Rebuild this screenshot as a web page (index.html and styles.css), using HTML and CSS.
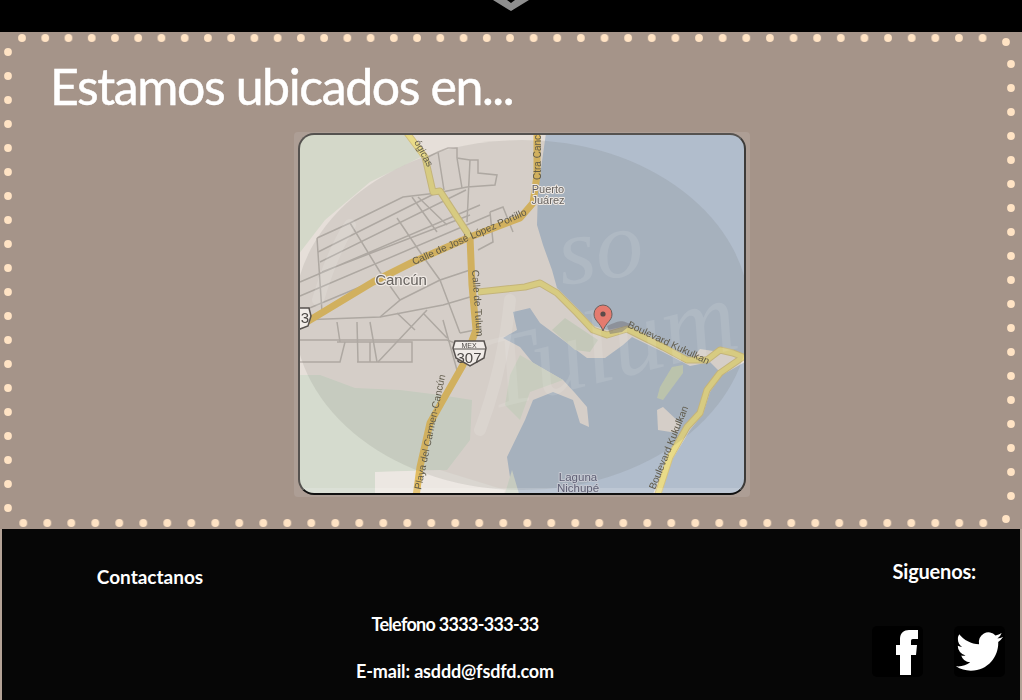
FILE: index.html
```html
<!DOCTYPE html>
<html>
<head>
    <title>Estamos ubicados</title>
    <meta charset="utf-8">
    <link rel="stylesheet" href="styles.css">
</head>
<body>
    <div class="top-bar">
        <svg class="chevron" width="36" height="12" viewBox="0 0 36 12">
            <path d="M0 0H14L18 3L22 0H36L18 11Z" fill="#8e8e8e"/>
        </svg>
    </div>

    <section class="location">
        <!-- dotted frame -->
        <svg class="dots" viewBox="0 32 1022 497">
            <defs>
                <pattern id="dotsTopA" patternUnits="userSpaceOnUse" x="10.38" y="32" width="23.24" height="12"><circle cx="11.62" cy="6" r="3.9" fill="#ffe3c4"/></pattern>
                <pattern id="dotsTopB" patternUnits="userSpaceOnUse" x="521.8" y="32" width="23.63" height="12"><circle cx="11.81" cy="6" r="3.9" fill="#ffe3c4"/></pattern>
                <pattern id="dotsBottom" patternUnits="userSpaceOnUse" x="11.3" y="517" width="24" height="12"><circle cx="12" cy="6" r="3.9" fill="#ffe3c4"/></pattern>
                <pattern id="dotsLeft" patternUnits="userSpaceOnUse" x="2" y="40" width="12" height="24"><circle cx="6" cy="12" r="3.9" fill="#ffe3c4"/></pattern>
                <pattern id="dotsRight" patternUnits="userSpaceOnUse" x="1005" y="52" width="12" height="24"><circle cx="6" cy="12" r="3.9" fill="#ffe3c4"/></pattern>
            </defs>
            <rect x="10.38" y="32" width="511.3" height="12" fill="url(#dotsTopA)"/>
            <rect x="521.8" y="32" width="472.6" height="12" fill="url(#dotsTopB)"/>
            <rect x="11.3" y="517" width="984" height="12" fill="url(#dotsBottom)"/>
            <rect x="2" y="40" width="12" height="480" fill="url(#dotsLeft)"/>
            <rect x="1005" y="52" width="12" height="456" fill="url(#dotsRight)"/>
            <circle cx="1006" cy="42" r="3.9" fill="#ffe3c4"/>
            <circle cx="1006" cy="519" r="3.9" fill="#ffe3c4"/>
        </svg>

        <h1>Estamos ubicados en...</h1>

        <div class="map-row">
            <div class="map">
                <svg class="map-art" width="456" height="365" viewBox="294 132 456 365">
                    <defs>
                        <clipPath id="mapClip"><rect x="299" y="134" width="446" height="360" rx="14"/></clipPath>
                    </defs>
                    <g clip-path="url(#mapClip)">
                        <rect x="294" y="132" width="456" height="365" fill="#e6dfd9"/>
                        <!-- parque arriba -->
                        <path d="M298 133H407L425 155L370 182L325 220L298 255Z" fill="#d4d8c9"/>
                        <!-- mar -->
                        <path d="M546 133H750V362L720 352L700 349L690 361L663 347L627 326L607 330L594 326L577 308L557 288L552 270L543 245L537 225L538 190Z" fill="#b1bdcc"/>
                        <path d="M660 497L672 460L690 430L703 414L710 392L722 375L745 362V497Z" fill="#b1bdcc"/>
                        <!-- laguna -->
                        <path d="M513 312L530 308L540 323L567 343L587 358L605 358L623 345L632 337L663 352L690 366L710 362L719 371L705 390L698 413L685 425L667 457L652 497H513L507 457L525 420L533 400L553 392L573 400L580 423L589 427L587 407L575 393L563 380L533 363L520 347L503 338L517 330Z" fill="#b1bdcc"/>
                        <!-- islas -->
                        <path d="M657 410L663 407L680 423L677 433L658 430Z" fill="#e6dfd9"/>
                        <path d="M672 367L683 365L683 373L663 400L657 398L660 387Z" fill="#c9d2b9"/>
                        <path d="M565 318L598 340L590 352L575 350L552 330Z" fill="#d3d8c8"/>
                        <!-- zonas verdes -->
                        <path d="M298 375L320 375L355 388L400 390L440 395L472 400L470 440L447 470L380 472L375 497H298Z" fill="#d5dbce"/>
                        <path d="M520 355L563 380L530 392L520 420L505 405L510 375Z" fill="#d8dccd"/>
                        <path d="M504 497L512 470L520 497Z" fill="#d5dbce"/>
                        <path d="M375 472L440 470L505 490L503 497H375Z" fill="#ece7e2"/>
                        <!-- calles -->
                        <g class="streets">
                            <path d="M317 238L350 223L403 197L437 193L467 187"/>
                            <path d="M318 252L438 192M320 262L466 190M322 272L470 215M300 282L480 205M300 296L490 215M300 312L420 262"/>
                            <path d="M317 238L322 312M350 223L380 272M397 218L422 255M412 197L437 232M418 197L447 225"/>
                            <path d="M428 157L438 152L448 148H457V158L470 160L478 160V173L497 175L495 185L467 187M470 160L467 222M438 152L444 190M457 158L462 188"/>
                            <path d="M490 212L503 207L513 232M490 212L493 242L478 250"/>
                            <path d="M300 320L380 317L443 305L470 297M300 340H447L455 343"/>
                            <path d="M337 322L340 342L337 342H412V362H357M370 342V362M357 322L358 362M370 322L377 362"/>
                            <path d="M378 362L427 310M397 313L415 330M423 313L447 338M443 320L448 338L457 370M460 333L475 330"/>
                            <path d="M380 272L400 300L380 317M422 255L440 280L470 270M400 300L440 280M440 280L460 333"/>
                            <path d="M300 362H340L345 342"/>
                        </g>
                        <!-- carreteras -->
                        <g class="road-casing">
                            <path d="M407 133L425 157L433 192L440 191L470 237"/>
                            <path d="M478 292L525 287L540 283L557 293L577 313L593 330L607 335L627 329L663 347L687 360L707 360L720 350L733 353L743 357L720 373L707 390L700 413L687 427L670 457L657 497"/>
                        </g>
                        <g class="road-main">
                            <path d="M300 326L373 282L413 262L470 237L520 218L533 203L537 175L537 133"/>
                            <path d="M470 237L472 285L476 330L463 365L443 400L430 423L420 467L416 497"/>
                        </g>
                        <g class="road-light">
                            <path d="M407 133L425 157L433 192L440 191L470 237"/>
                            <path d="M478 292L525 287L540 283L557 293L577 313L593 330L607 335L627 329L663 347L687 360L707 360L720 350L733 353L743 357L720 373L707 390L700 413L687 427L670 457L657 497"/>
                        </g>
                        <!-- sello de agua -->
                        <ellipse cx="522" cy="315" rx="228" ry="175" fill="#5d5a55" fill-opacity="0.12"/>
                        <path class="swash" d="M480 430C495 390 505 350 510 300M318 300C330 260 340 240 350 225"/>
                        <text class="mark" x="562" y="285" transform="rotate(-8 562 285)">so</text>
                        <text class="mark mark-big" x="490" y="410" transform="rotate(-14 490 410)">Tulum</text>
                        <rect x="294" y="488" width="456" height="9" fill="#fff" fill-opacity="0.16"/>
                        <!-- etiquetas -->
                        <text class="label label-road" transform="translate(414 265) rotate(-24)">Calle de José López Portillo</text>
                        <text class="label label-road" transform="translate(472 270) rotate(86)">Calle de Tulum</text>
                        <text class="label label-road" transform="translate(541 180) rotate(-90)">Ctra Canc</text>
                        <text class="label label-road" transform="translate(421 490) rotate(-78)">Playa del Carmen-Cancún</text>
                        <text class="label label-road" transform="translate(627 327) rotate(25)">Boulevard Kukulkan</text>
                        <text class="label label-road" transform="translate(655 490) rotate(-68)">Boulevard Kukulkan</text>
                        <text class="label label-road" transform="translate(414 142) rotate(62)">ógicas</text>
                        <text class="label label-town" x="401" y="285">Cancún</text>
                        <text class="label label-place" x="548" y="193">Puerto</text>
                        <text class="label label-place" x="548" y="204">Juárez</text>
                        <text class="label label-lagoon" x="578" y="481">Laguna</text>
                        <text class="label label-lagoon" x="578" y="492">Nichupé</text>
                        <!-- escudos -->
                        <path d="M455 341H484L486 348L484 358L470 366L456 358L453 348Z" fill="#f1ece8" stroke="#57524f" stroke-width="1.5"/>
                        <path d="M454 349H485" stroke="#57524f"/>
                        <text class="label shield-top" x="469" y="348">MEX</text>
                        <text class="label shield-num" x="469" y="363">307</text>
                        <path d="M292 308H309L311 316L308 326L292 332Z" fill="#f1ece8" stroke="#57524f" stroke-width="1.5"/>
                        <text class="label shield-num" x="305" y="323">3</text>
                        <!-- marcador -->
                        <path d="M607 326C624 318 622 322 632 324L622 332L610 334Z" fill="#6e6b6e" fill-opacity="0.45"/>
                        <path d="M603 331C600 322 594 321 594 314A9 9 0 0 1 612 314C612 321 606 322 603 331Z" fill="#e57b6f" stroke="#6b5e5b"/>
                        <circle cx="603" cy="314" r="2.6" fill="#5b4b49"/>
                    </g>
                </svg>
            </div>
        </div>
    </section>

    <footer class="footer">
        <div class="contact-title">Contactanos</div>
        <div class="contact-info">
            <p>Telefono 3333-333-33</p>
            <p>E-mail: asddd@fsdfd.com</p>
        </div>
        <div class="social">
            <div class="social-title">Siguenos:</div>
            <div class="social-icons">
                <a class="social-icon" href="#">
                    <svg width="51" height="51" viewBox="0 0 51 51"><path d="M28 49V29H24V19H28V13C28 7 32 4 37 4H46V13H41C39 13 39 14 39 16V19H45L44 29H39V49Z" fill="#fff"/></svg>
                </a>
                <a class="social-icon" href="#">
                    <svg width="51" height="51" viewBox="-1 -1 26 26"><path d="M23.953 4.57a10 10 0 01-2.825.775 4.958 4.958 0 002.163-2.723c-.951.555-2.005.959-3.127 1.184a4.92 4.92 0 00-8.384 4.482C7.69 8.095 4.067 6.13 1.64 3.162a4.822 4.822 0 00-.666 2.475c0 1.71.87 3.213 2.188 4.096a4.904 4.904 0 01-2.228-.616v.06a4.923 4.923 0 003.946 4.827 4.996 4.996 0 01-2.212.085 4.936 4.936 0 004.604 3.417 9.867 9.867 0 01-6.102 2.105c-.39 0-.779-.023-1.17-.067a13.995 13.995 0 007.557 2.209c9.053 0 13.998-7.496 13.998-13.985 0-.21 0-.42-.015-.63A9.935 9.935 0 0024 4.59z" fill="#fff"/></svg>
                </a>
            </div>
        </div>
    </footer>
</body>
</html>
```

FILE: styles.css
```css
* {
    margin: 0;
    padding: 0;
    box-sizing: border-box;
}

html, body {
    height: 700px;
    overflow: hidden;
}

body {
    font-family: Lato, "Noto Sans", sans-serif;
    background: #b3a296;
    color: white;
}

.top-bar {
    height: 32px;
    background: black;
    display: flex;
    justify-content: center;
}

.chevron {
    display: block;
}

.location {
    position: relative;
    height: 497px;
    background: #a59489;
}

.dots {
    position: absolute;
    top: 0;
    left: 0;
    width: 1022px;
    height: 497px;
    pointer-events: none;
}

.location h1 {
    height: 100px;
    padding: 24px 0 0 50px;
    font-size: 50px;
    font-weight: 400;
    line-height: 60px;
    letter-spacing: -1.4px;
    -webkit-text-stroke: 0.5px white;
}

.map-row {
    display: flex;
    justify-content: center;
    padding-left: 22px;
}

.map {
    width: 456px;
    height: 365px;
    position: relative;
    background: #ad9e95;
    border-radius: 4px;
}

.map::after {
    content: "";
    position: absolute;
    top: 1px;
    left: 4px;
    right: 4px;
    bottom: 2px;
    border: 2px solid #3c3a38;
    border-left-color: #55524f;
    border-bottom-color: #111;
    border-top-color: #55524f;
    border-radius: 16px;
}

.map-art {
    display: block;
    filter: blur(0.5px);
}

.streets path {
    fill: none;
    stroke: #bab3ad;
    stroke-width: 1.5;
}

.road-casing path {
    fill: none;
    stroke: #d3c180;
    stroke-width: 7;
    stroke-linejoin: round;
}

.road-main path {
    fill: none;
    stroke: #e2bc60;
    stroke-width: 7;
    stroke-linejoin: round;
}

.road-light path {
    fill: none;
    stroke: #e9db88;
    stroke-width: 5;
    stroke-linejoin: round;
}

.swash {
    fill: none;
    stroke: white;
    stroke-opacity: 0.12;
    stroke-width: 12;
    stroke-linecap: round;
}

.mark {
    font-family: "Liberation Serif", serif;
    font-style: italic;
    font-size: 96px;
    fill: white;
    fill-opacity: 0.1;
}

.mark-big {
    font-size: 104px;
}

.label {
    font-family: "Liberation Sans", sans-serif;
    text-anchor: middle;
    paint-order: stroke;
    stroke-linejoin: round;
}

.label-road {
    font-size: 10px;
    text-anchor: start;
    fill: #5f5a4a;
}

.label-town {
    font-size: 15px;
    fill: #66625f;
    stroke: #eee8e3;
    stroke-width: 2.5px;
}

.label-place {
    font-size: 11px;
    fill: #66625f;
    stroke: #eee8e3;
    stroke-width: 2px;
}

.label-lagoon {
    font-size: 11.5px;
    fill: #5f6075;
    stroke: #c6c9d2;
    stroke-width: 2px;
}

.shield-top {
    font-size: 7px;
    fill: #4c4845;
}

.shield-num {
    font-size: 15px;
    fill: #4c4845;
}

.footer {
    height: 171px;
    margin: 0 2px;
    background: #060606;
    display: flex;
    font-size: 18px;
    font-weight: 700;
}

.contact-title {
    width: 296px;
    padding-top: 36px;
    text-align: center;
    font-size: 19px;
}

.contact-info {
    width: 314px;
    padding-top: 83px;
    text-align: center;
}

.contact-info p {
    margin-bottom: 23px;
    line-height: 24px;
    letter-spacing: -0.15px;
}

.contact-info p:first-child {
    letter-spacing: -0.7px;
}

.social {
    flex: 1;
    padding: 30px 15px 0 0;
    display: flex;
    flex-direction: column;
    align-items: flex-end;
}

.social-title {
    font-size: 20px;
    line-height: 24px;
    letter-spacing: -0.2px;
    margin-right: 29px;
    margin-bottom: 43px;
}

.social-icons {
    display: flex;
    gap: 31px;
}

.social-icon {
    display: block;
    width: 51px;
    height: 51px;
    background: black;
    border-radius: 5px;
}

.social-icon svg {
    display: block;
}
```
